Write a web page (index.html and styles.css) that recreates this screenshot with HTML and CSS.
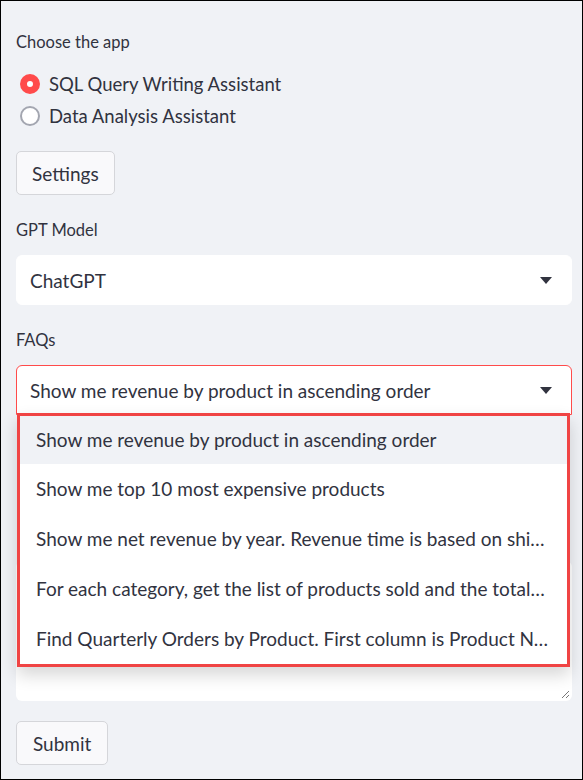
FILE: index.html
```html
<!DOCTYPE html>
<html lang="en">
<head>
<meta charset="utf-8">
<title>Sidebar</title>
<link rel="stylesheet" href="styles.css">
</head>
<body>
<div class="frame">
  <div class="label first">Choose the app</div>
  <div class="radios">
    <label class="radio-row"><span class="radio on"></span><span class="radio-text">SQL Query Writing Assistant</span></label>
    <label class="radio-row"><span class="radio"></span><span class="radio-text">Data Analysis Assistant</span></label>
  </div>
  <button class="btn settings">Settings</button>
  <div class="label">GPT Model</div>
  <div class="select">
    <span class="select-value">ChatGPT</span>
    <svg class="caret" width="12" height="7" viewBox="0 0 12 7"><path d="M0 0h12L6 7z" fill="#31333f"/></svg>
  </div>
  <div class="label">FAQs</div>
  <div class="faq-wrap">
    <div class="select open">
      <span class="select-value">Show me revenue by product in ascending order</span>
      <svg class="caret" width="12" height="7" viewBox="0 0 12 7"><path d="M0 0h12L6 7z" fill="#31333f"/></svg>
    </div>
    <ul class="menu">
      <li class="item active">Show me revenue by product in ascending order</li>
      <li class="item">Show me top 10 most expensive products</li>
      <li class="item">Show me net revenue by year. Revenue time is based on shipped date</li>
      <li class="item">For each category, get the list of products sold and the total sales amount</li>
      <li class="item">Find Quarterly Orders by Product. First column is Product Name, then year</li>
    </ul>
  </div>
  <div class="textarea">
    <svg class="grip" width="9" height="9" viewBox="0 0 9 9"><path d="M8 1L1 8M8 5L5 8" stroke="#777" stroke-width="1"/></svg>
  </div>
  <button class="btn submit">Submit</button>
</div>
</body>
</html>
```

FILE: styles.css
```css
* { box-sizing: border-box; }
html, body { margin: 0; padding: 0; }
body {
  width: 583px;
  height: 780px;
  font-family: Lato, "Noto Sans", sans-serif;
  color: #31333f;
}
.frame {
  width: 583px;
  height: 780px;
  border: 1px solid #000;
  background: #f0f2f6;
  padding: 0 11px 0 15px;
  display: flex;
  flex-direction: column;
  align-items: flex-start;
}
.label {
  font-size: 16.5px;
  line-height: 22px;
  height: 22px;
  margin-top: 24px;
}
.label.first { margin-top: 30px; }
.radios {
  display: flex;
  flex-direction: column;
  margin-top: 15px;
}
.radio-row {
  display: flex;
  align-items: center;
  height: 32px;
}
.radio {
  width: 20px;
  height: 20px;
  border-radius: 50%;
  border: 2px solid #a3a6b0;
  background: #fff;
  margin: 0 9px 0 4px;
}
.radio.on {
  border: 7px solid #ff4b4b;
  background: #fff;
}
.radio-text { font-size: 18.5px; line-height: 24px; }
.btn {
  font-family: inherit;
  font-size: 19px;
  color: #31333f;
  background: #f9f9fb;
  border: 1px solid #d5d6da;
  border-radius: 5px;
  height: 44px;
  padding: 0 15px;
}
.settings { margin-top: 19px; }
.submit { margin-top: 20px; padding: 0 16px; }
.select {
  position: relative;
  width: 556px;
  height: 50px;
  background: #fff;
  border: 1px solid #fff;
  border-radius: 6px;
  display: flex;
  align-items: center;
  padding: 0 19px 0 13px;
  margin-top: 14px;
  font-size: 19px;
}
.select-value { flex: 1; }
.select.open {
  border-color: #ff4b4b;
  margin-top: 0;
  border-bottom-left-radius: 0;
  border-bottom-right-radius: 0;
}
.faq-wrap {
  position: relative;
  z-index: 2;
  margin-top: 14px;
}
.menu {
  position: absolute;
  left: 1px;
  top: 48px;
  width: 553px;
  margin: 0;
  padding: 0;
  list-style: none;
  background: #fff;
  border: 3px solid #f04444;
  box-shadow: 0 8px 16px rgba(0,0,0,0.16);
}
.item {
  height: 50px;
  line-height: 50px;
  padding: 0 18px 0 16px;
  font-size: 19px;
  white-space: nowrap;
  overflow: hidden;
  text-overflow: ellipsis;
}
.item:first-child { height: 48px; line-height: 48px; }
.item.active { background: #f0f2f6; }
.textarea {
  position: relative;
  width: 556px;
  height: 140px;
  margin-top: 146px;
  background: #fff;
  border-radius: 6px;
}
.grip { position: absolute; right: 2px; bottom: 2px; }
```
